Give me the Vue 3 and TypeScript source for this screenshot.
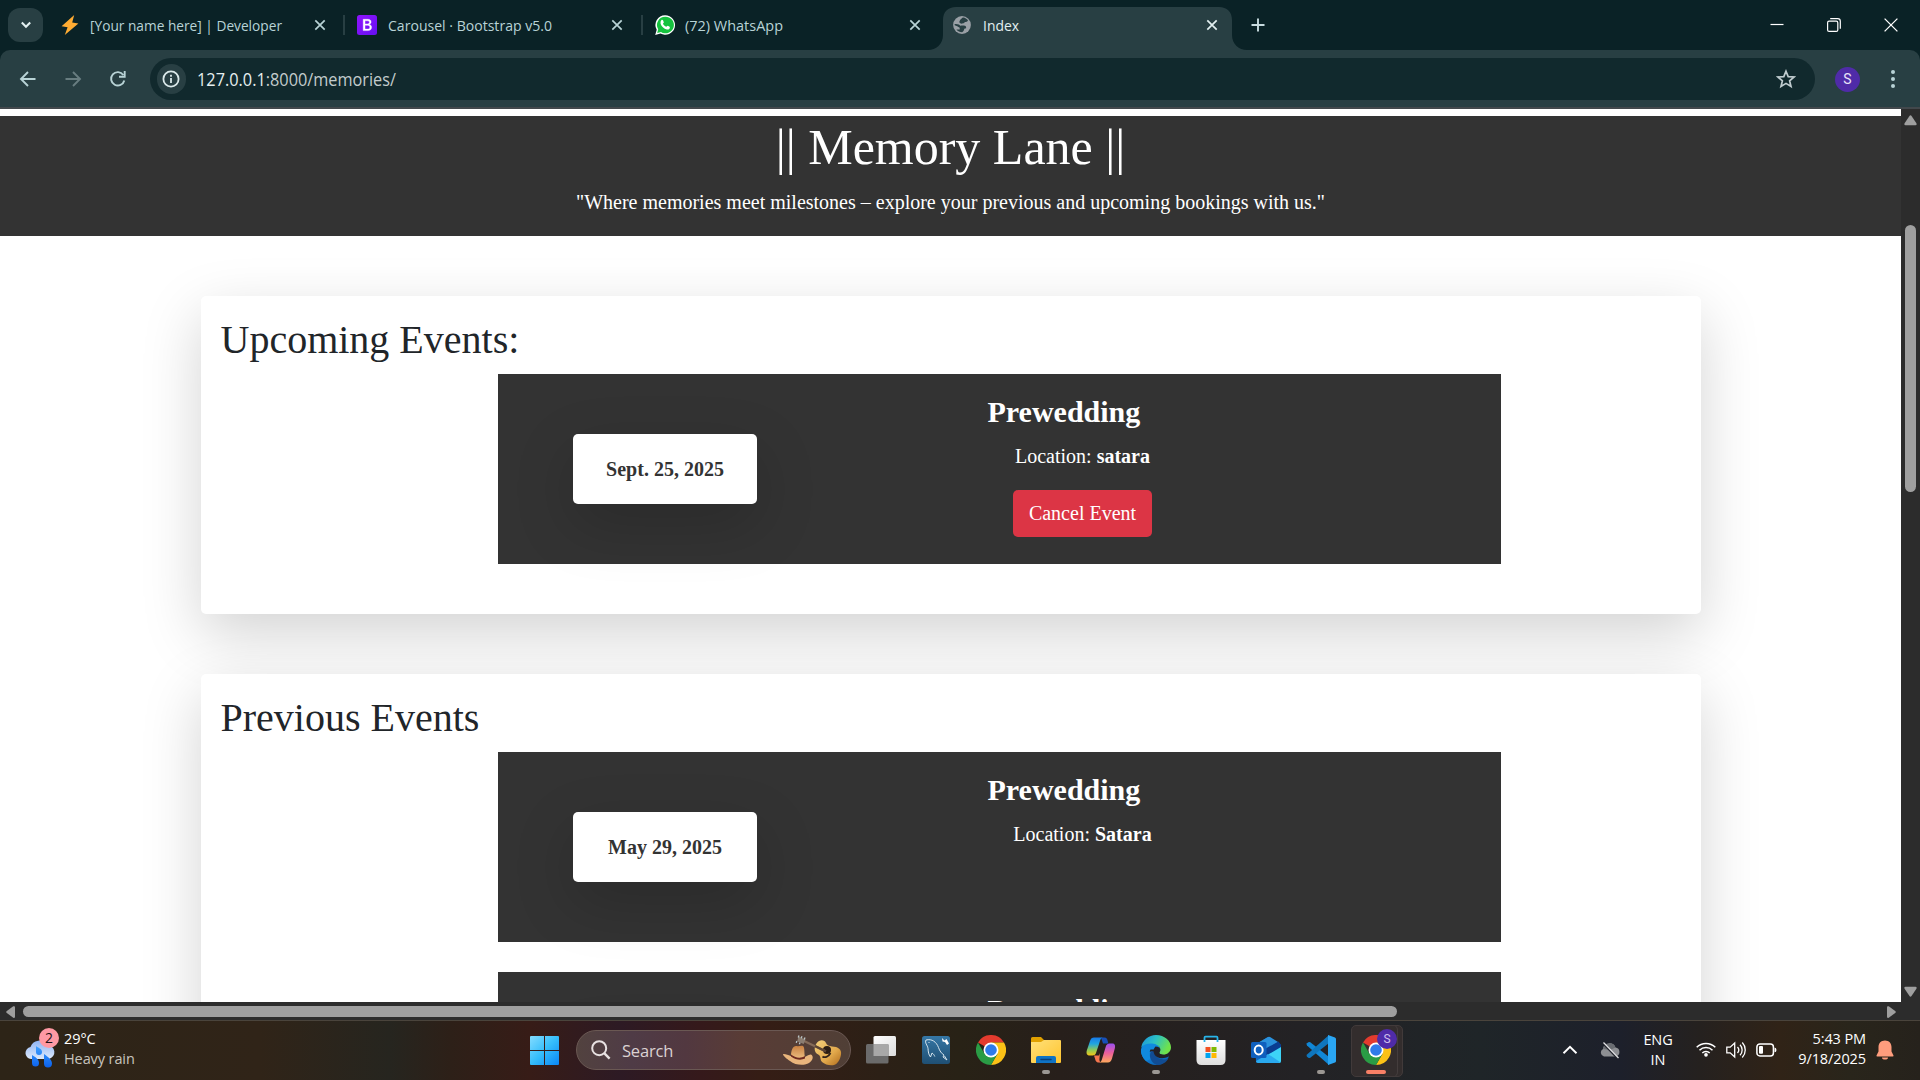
<script setup lang="ts">
interface Tab {
  icon: 'bolt' | 'bootstrap' | 'whatsapp' | 'globe'
  title: string
  width: number
  active?: boolean
}
interface EventItem {
  name: string
  date: string
  location: string
  cancellable?: boolean
}
interface Section {
  heading: string
  events: EventItem[]
}
interface AppIcon {
  id: string
  state?: 'open' | 'current'
}

const tabs: Tab[] = [
  { icon: 'bolt', title: '[Your name here] | Developer', width: 192 },
  { icon: 'bootstrap', title: 'Carousel · Bootstrap v5.0', width: 164 },
  { icon: 'whatsapp', title: '(72) WhatsApp', width: 98 },
  { icon: 'globe', title: 'Index', width: 36, active: true },
]

const sections: Section[] = [
  {
    heading: 'Upcoming Events:',
    events: [{ name: 'Prewedding', date: 'Sept. 25, 2025', location: 'satara', cancellable: true }],
  },
  {
    heading: 'Previous Events',
    events: [
      { name: 'Prewedding', date: 'May 29, 2025', location: 'Satara' },
      { name: 'Prewedding', date: '', location: '' },
    ],
  },
]

const apps: AppIcon[] = [
  { id: 'taskview' },
  { id: 'mysql' },
  { id: 'chrome' },
  { id: 'folder', state: 'open' },
  { id: 'copilot' },
  { id: 'edge', state: 'open' },
  { id: 'store' },
  { id: 'outlook' },
  { id: 'vscode', state: 'open' },
  { id: 'chrome', state: 'current' },
]
</script>

<template>
  <div class="desktop">
    <div class="tabstrip">
      <div class="tabsearch">
        <svg width="12" height="12" viewBox="0 0 12 12"><path d="M1.8 3.6 6 7.8l4.2-4.2" fill="none" stroke="#e3f0f1" stroke-width="2.1" /></svg>
      </div>
      <div v-for="(t, i) in tabs" :key="t.title" class="tab" :class="{ active: t.active, divided: i < 2 }">
        <svg v-if="t.active" class="tabshape" width="321" height="43" viewBox="0 0 321 43">
          <path d="M0 43h1C9 43 16 37 16 28V13C16 5 21 0 29 0h263c8 0 13 5 13 13v15c0 9 7 15 15 15h1z" fill="#283f43" />
        </svg>
        <svg v-if="t.icon === 'bolt'" class="fav" viewBox="0 0 20 20"><path d="M14.2 0 1.6 11.2l6 1L4.8 20 18.4 8.6l-6.2-1.2z" fill="#ffac33" /></svg>
        <svg v-else-if="t.icon === 'bootstrap'" class="fav boot" viewBox="0 0 20 20">
          <defs><linearGradient id="bs" x1="0" y1="0" x2="1" y2="1"><stop offset="0" stop-color="#9013fe" /><stop offset="1" stop-color="#6610f2" /></linearGradient></defs>
          <rect width="20" height="20" rx="2.5" fill="url(#bs)" />
          <path d="M6.2 4.3h4.7c2.1 0 3.2 1 3.2 2.6 0 1.3-.8 2.1-2 2.5 1.600.3 2.500 1.300 2.500 2.900 0 2-1.300 3.300-3.800 3.300H6.200z M8 8.900h2.400c1.300 0 2-.5 2-1.600 0-1-.7-1.500-1.900-1.500H8z M8 14.100h2.700c1.400 0 2.100-.7 2.100-1.900 0-1.200-.8-1.900-2.200-1.900H8z" fill="#fff" fill-rule="evenodd" stroke="#fff" stroke-width=".4" />
        </svg>
        <svg v-else-if="t.icon === 'whatsapp'" class="fav" viewBox="0 0 20 20">
          <path d="M10.200.2a9.700 9.700 0 0 0-8.500 14.500L.2 20l5.300-1.400A9.800 9.800 0 1 0 10.200.2z" fill="#fff" />
          <path d="M10.200 1.700a8.200 8.200 0 0 0-7 12.500l-1 3.700 3.800-1A8.300 8.300 0 1 0 10.200 1.700z" fill="#15c23e" />
          <path d="M6.300 5.300c.6-.7 1.400-.5 1.700 0l.8 1.900c.1.500-.8 1.200-.8 1.500.6 1.400 1.800 2.500 3.300 3.100.4 0 1-1.100 1.500-1l1.800.9c.5.300.3 1.600-.4 2.200-1 .8-2.400.9-4.800-.5C7.200 12 5.700 9.900 5.500 8.200c-.1-1.200.2-2.200.8-2.900z" fill="#fff" />
        </svg>
        <svg v-else class="fav globe" viewBox="0 0 20 20">
          <circle cx="10" cy="10" r="8.900" fill="#9aa0a6" />
          <path d="M11.500 2.700c2 .4 3.300 1.300 4.300 2.800-.6 1.200-1.700 1.500-3.300 1.500v1.700l-2 .6-.4 1.600h2.400c1.600 0 2.500 1 2.500 2.500l2-.3c-1 2.200-2.900 3.600-5.300 4.100-1-.3-1.400-.9-1.400-2.400l-.8-1.500-1.700-.6-.2-2.100-3-.7-1.900-2c-.3 4.300 1.600 7.500 5.600 8.800l-.4-2.400-1.300-1.200" fill="none" stroke="#283f43" stroke-width="0" />
          <path d="M11.300 2.600c-1.600.3-1.700 1.500-3 2.100-.7.500-.2 1.700-1.300 2.300l2 1.700 3.500-.8V7c1.700 0 3-.2 3.500-1.700-1.300-1.500-2.800-2.400-4.700-2.700zM2.600 8.900c1.500.2 4.400-.2 5 1.200.4 1 1.300.4 2.700.4h1.500c1.900 0 2.600 1.300 2.300 2.700l-1.800.6c-.3 1.300-.7 2.600-2.200 3.400-2.300-.1-4.200-.8-5.700-2.600h3.300v-1.800l-2.500-1.500-2.500-1z" fill="#283f43" />
        </svg>
        <div class="title"><svg class="fit" :width="t.width + 4" height="24"><text x="0" y="17.500" :textLength="t.width" lengthAdjust="spacingAndGlyphs">{{ t.title }}</text></svg></div>
        <svg class="close" width="12" height="12" viewBox="0 0 12 12"><path d="m1.300 1.300 9.400 9.400M10.700 1.300l-9.400 9.400" stroke="currentColor" stroke-width="1.700" /></svg>
      </div>
      <svg class="plus" width="14" height="14" viewBox="0 0 14 14"><path d="M7 .5v13M.5 7h13" stroke="#c8dcdf" stroke-width="1.900" /></svg>
      <div class="wincontrols">
        <svg width="14" height="14" viewBox="0 0 14 14"><path d="M.5 6.500h13" stroke="#fff" stroke-width="1.200" /></svg>
        <svg width="14" height="14" viewBox="0 0 14 14" fill="none" stroke="#fff" stroke-width="1.200"><rect x=".6" y="3.200" width="10.200" height="10.200" rx="1.500" /><path d="M3.200.7h7.500c1.600 0 2.600 1 2.600 2.600v7.400" /></svg>
        <svg width="14" height="14" viewBox="0 0 14 14"><path d="m.6.6 12.800 12.800M13.400.6.6 13.400" stroke="#fff" stroke-width="1.300" /></svg>
      </div>
    </div>

    <div class="toolbarwrap">
      <div class="toolbar">
        <svg class="nav" viewBox="0 0 20 20" fill="none" stroke="#b8d3d6" stroke-width="1.900"><path d="M17.500 10H3.500M10 3l-7 7 7 7" /></svg>
        <svg class="nav" viewBox="0 0 20 20" fill="none" stroke="#687d80" stroke-width="1.900"><path d="M2.500 10h14M10 3l7 7-7 7" /></svg>
        <svg class="nav" viewBox="0 0 20 20" fill="none" stroke="#b8d3d6" stroke-width="1.900"><path d="M16.300 11.500A6.700 6.700 0 1 1 15.300 6M16.700 2v5.700H11" /></svg>
        <div class="omnibox">
          <div class="info">
            <svg width="18" height="18" viewBox="0 0 18 18"><circle cx="9" cy="9" r="7.600" fill="none" stroke="#dbe9ea" stroke-width="1.800" /><path d="M9 8v5M9 4.800v1.900" stroke="#dbe9ea" stroke-width="1.800" /></svg>
          </div>
          <svg class="fit url" width="204" height="28"><text x="0" y="21" textLength="199" lengthAdjust="spacingAndGlyphs"><tspan fill="#e6eff0">127.0.0.1</tspan><tspan fill="#c3cccc">:8000/memories/</tspan></text></svg>
          <svg class="star" width="20" height="20" viewBox="0 0 20 20"><path d="m10 2.200 2.200 5.400 5.900.4-4.500 3.800 1.400 5.700-5-3.100-5 3.100 1.400-5.700L1.900 8l5.900-.4z" fill="none" stroke="#c0cccf" stroke-width="1.700" /></svg>
        </div>
        <div class="avatar">S</div>
        <svg class="dots" width="6" height="20" viewBox="0 0 6 20" fill="#b8d3d6"><circle cx="3" cy="3.100" r="2" /><circle cx="3" cy="10" r="2" /><circle cx="3" cy="16.900" r="2" /></svg>
      </div>
    </div>

    <div class="viewport">
      <div class="page">
        <header class="banner">
          <h1>|| Memory Lane ||</h1>
          <p>"Where memories meet milestones – explore your previous and upcoming bookings with us."</p>
        </header>
        <section v-for="s in sections" :key="s.heading" class="panel">
          <h2>{{ s.heading }}</h2>
          <article v-for="(e, i) in s.events" :key="i" class="event">
            <div class="date">{{ e.date }}</div>
            <div class="details">
              <h4>{{ e.name }}</h4>
              <p v-if="e.location">Location: <b>{{ e.location }}</b></p>
              <button v-if="e.cancellable">Cancel Event</button>
            </div>
          </article>
        </section>
      </div>
      <div class="vbar">
        <svg width="13" height="11" viewBox="0 0 13 11"><path d="M5.300 1.200q1.200-1.700 2.400 0l4.700 7q.8 2-.9 2H1.500q-1.700 0-.9-2z" fill="#9f9f9f" /></svg>
        <div class="vthumb"></div>
        <svg class="down" width="13" height="11" viewBox="0 0 13 11"><path d="M5.300 9.800q1.200 1.700 2.400 0l4.700-7q.8-2-.9-2H1.500q-1.700 0-.9 2z" fill="#9f9f9f" /></svg>
      </div>
    </div>
    <div class="hbar">
      <svg width="10" height="12" viewBox="0 0 10 12"><path d="M.8 4.900q-1.200 1.100 0 2.200l6.500 4.600q1.700.7 1.700-.9V1.200Q9-.3 7.300.3z" fill="#9f9f9f" /></svg>
      <div class="hthumb"></div>
      <svg class="right" width="10" height="12" viewBox="0 0 10 12"><path d="M9.200 4.900q1.200 1.100 0 2.200l-6.500 4.600q-1.700.7-1.700-.9V1.200Q1-.3 2.700.3z" fill="#9f9f9f" /></svg>
    </div>

    <footer class="taskbar">
      <div class="weather">
        <div class="wicon">
          <svg width="32" height="30" viewBox="0 0 32 30">
            <defs>
              <linearGradient id="cl" x1="0" y1="0" x2="0" y2="1"><stop offset="0" stop-color="#8fb4f4" /><stop offset="1" stop-color="#dde9fb" /></linearGradient>
              <linearGradient id="dr" x1="0" y1="0" x2="0" y2="1"><stop offset="0" stop-color="#3fa0ff" /><stop offset="1" stop-color="#0b62ee" /></linearGradient>
            </defs>
            <path d="M7 21a6 6 0 0 1-.5-11.900A9 9 0 0 1 23 7.200 7 7 0 0 1 25 21z" fill="url(#cl)" />
            <path d="M12 8c2 2 6 2.500 6 6a3 3 0 0 1-6 0zM8 17c3 2 7 4 7 8a3.500 3.500 0 0 1-7 0zM20 16c4 3 8 5.500 8 9.500a4 4 0 0 1-8 0z" fill="url(#dr)" />
          </svg>
          <span class="badge">2</span>
        </div>
        <div class="wtext"><div>29°C</div><div class="dim">Heavy rain</div></div>
      </div>
      <svg class="start" width="29" height="29" viewBox="0 0 29 29">
        <defs><linearGradient id="win" x1="0" y1="0" x2="1" y2="1"><stop offset="0" stop-color="#84dcff" /><stop offset=".5" stop-color="#35bdfb" /><stop offset="1" stop-color="#0a86f5" /></linearGradient></defs>
        <path d="M1 0h13v14H0V1q0-1 1-1zM15 0h13q1 0 1 1v13H15zM0 15h14v14H1q-1 0-1-1zM15 15h14v13q0 1-1 1H15z" fill="url(#win)" />
      </svg>
      <div class="search">
        <svg width="20" height="20" viewBox="0 0 20 20" fill="none" stroke="#e8e2e2" stroke-width="2"><circle cx="8.200" cy="8.200" r="7" /><path d="m13.200 13.200 5.400 5.400" stroke-width="2.400" /></svg>
        <span>Search</span>
        <svg class="doodle" width="60" height="32" viewBox="0 0 60 32">
          <defs>
            <linearGradient id="gt" x1="0" y1="0" x2="1" y2="1"><stop offset="0" stop-color="#f3d07c" /><stop offset=".6" stop-color="#e2a94c" /><stop offset="1" stop-color="#b06c1d" /></linearGradient>
            <linearGradient id="hat" x1="0" y1="0" x2="0" y2="1"><stop offset="0" stop-color="#c98142" /><stop offset="1" stop-color="#f0c387" /></linearGradient>
          </defs>
          <path d="M32 17c-1-4 1-8 4-10 3-1.500 6-.5 7 2 .8 2.500 3 3 6 3.500 6 0 10 3 9 8-.6 5-3.500 9.500-7 10.500-4 1-9-.5-12-3-2-2-1-4.500-2.500-6.500-1.500-1.500-4-2-4.500-4.500z" fill="url(#gt)" />
          <circle cx="44" cy="16" r="4" fill="#2b1d14" />
          <path d="M39.500 22.500c2 1.500 6 .5 8-3.500" fill="none" stroke="#33231a" stroke-width="1.800" />
          <path d="m20 6.500 22.500 10.800" stroke="#856b59" stroke-width="2.200" />
          <path d="m32 12 11 5.500" stroke="#5b4332" stroke-width="2.400" />
          <path d="m15.500 2.500 7 3-1.800 4.500-6.500-2.700z" fill="#8b7d72" />
          <path d="m16 1.500-.8 2M19 2.300l-.8 2M22 3.500l-.8 2M13.800 7l-.5 1.800M17 8.500l-.6 1.800" stroke="#b9c4c6" stroke-width="1.300" />
          <path d="M8 22c0-6 2-10 5-10 3 .5 5-.5 7 0 2 1 1 8 2 11l-7 3z" fill="url(#hat)" />
          <path d="M0 20c5-.5 9 4 17 4 5 0 9-4 11-3.500C31 22 30 27 25 29.500 20 32 12 31 7 27 4 25 0 22 0 20z" fill="#e9b57c" />
          <path d="M8 20.500c4 3 9 4.500 14 1.500v2.500c-4 2-9 1.500-14-2z" fill="#6f2a20" />
        </svg>
      </div>
      <div class="apps">
        <div v-for="(a, i) in apps" :key="i" class="app" :class="a.state">
          <svg v-if="a.id === 'taskview'" width="30" height="30" viewBox="0 0 30 30">
            <defs><linearGradient id="tv" x1="0" y1="0" x2="1" y2="1"><stop offset="0" stop-color="#fff" /><stop offset="1" stop-color="#dcdcdc" /></linearGradient></defs>
            <rect x="7.500" y="1" width="22.500" height="20" rx="1.500" fill="url(#tv)" /><rect x="0" y="9" width="22.500" height="19.500" rx="1.500" fill="#6b6b6b" /><path d="M7.500 9h15v12h-15z" fill="#a8a8a8" />
          </svg>
          <svg v-else-if="a.id === 'mysql'" width="30" height="30" viewBox="0 0 30 30">
            <defs><linearGradient id="my" x1="0" y1="0" x2="0" y2="1"><stop offset="0" stop-color="#3577a6" /><stop offset="1" stop-color="#1f4f73" /></linearGradient></defs>
            <rect x="1" y="1" width="28" height="28" rx="2.500" fill="url(#my)" />
            <path d="M5 5c6-1.500 10.500 2 12.500 7.500 1.200 3.500 3 6 5.500 7.500l-1 2 4 3-2.500-4M5 5c-1.500 3 1.500 5 2 8.500.3 3.500.5 6 2.500 8.500l1.500-4c1.500 1 2.200 2 2.800 3.500M7.500 7.500h1" fill="none" stroke="#d6e5ee" stroke-width="1" /><path d="m21 3 2.500 2.500 2-1.500L28 8.500l-2 1.500-2-3-2.500-.5z" fill="#fff" />
          </svg>
          <svg v-else-if="a.id === 'chrome'" width="30" height="30" viewBox="0 0 48 48">
            <path d="M24 24 3.200 12A24 24 0 0 1 44.800 12H24z" fill="#e33b2e" /><path d="M24 24V12h20.800A24 24 0 0 1 24 48l10.400-18z" fill="#fbc116" /><path d="M24 24l10.400 6L24 48A24 24 0 0 1 3.200 12l10.400 18z" fill="#2a9c45" />
            <circle cx="24" cy="24" r="12" fill="#fff" /><circle cx="24" cy="24" r="9.300" fill="#2f7bea" />
          </svg>
          <svg v-else-if="a.id === 'folder'" width="30" height="30" viewBox="0 0 30 30">
            <defs><linearGradient id="fo" x1="0" y1="0" x2="1" y2="1"><stop offset="0" stop-color="#ffe07a" /><stop offset="1" stop-color="#ffc42e" /></linearGradient></defs>
            <path d="M0 3.500Q0 2 1.500 2H10l3 3h14v6H0z" fill="#e0a000" /><path d="M0 7h10l3-2h16q1 0 1 1v21q0 1-1 1H1q-1 0-1-1z" fill="url(#fo)" />
            <path d="M5 28v-5q0-2 2-2h16q2 0 2 2v5z" fill="#0f73c4" /><path d="M10 24.500h10" stroke="#0a3f78" stroke-width="1.500" stroke-linecap="round" />
          </svg>
          <svg v-else-if="a.id === 'copilot'" width="30" height="30" viewBox="0 0 30 30">
            <defs>
              <linearGradient id="ca" x1="0" y1="0" x2="0" y2="1"><stop offset="0" stop-color="#1779e8" /><stop offset=".35" stop-color="#20a5e0" /><stop offset=".7" stop-color="#8fca56" /><stop offset="1" stop-color="#f6c515" /></linearGradient>
              <linearGradient id="cb" x1="0" y1="0" x2="0" y2="1"><stop offset="0" stop-color="#9a4ff0" /><stop offset=".5" stop-color="#ec5f9b" /><stop offset="1" stop-color="#ffa95c" /></linearGradient>
            </defs>
            <path d="M15 2.500h3.500c2 0 2.800 1.500 3.300 3.800l.4 2.200H17z" fill="#174fb8" /><path d="M8 2.500h9c-2 0-2.500 1.500-3.500 5l-3 9c-.8 3-2 4-4 4H4c-3 0-4-2-3.200-5L4 6c.8-2.400 2-3.500 4-3.500z" fill="url(#ca)" />
            <path d="M22 27.500h-9c2 0 2.500-1.500 3.500-5l3-10c.8-3 2-4 4-4H26c3 0 3.500 2 2.800 5L26 23.500c-.8 2.500-2 4-4 4z" fill="url(#cb)" /><path d="M8 20.500h5l1-2.500-.5 5c-.5 3 .5 4.500 2.500 4.500h-3c-3 0-3.500-2-4-4z" fill="#f5754e" />
          </svg>
          <svg v-else-if="a.id === 'edge'" width="30" height="30" viewBox="0 0 30 30">
            <defs>
              <linearGradient id="ea" x1="0" y1="0" x2="1" y2=".4"><stop offset="0" stop-color="#1a8fe0" /><stop offset=".5" stop-color="#2cc1c4" /><stop offset="1" stop-color="#6fe24b" /></linearGradient>
              <linearGradient id="eb" x1="0" y1="0" x2="1" y2="1"><stop offset="0" stop-color="#1390e6" /><stop offset="1" stop-color="#0a5cae" /></linearGradient>
            </defs>
            <path d="M0 14A15 15 0 0 0 15 30c5.500 0 10-3 12.500-7.500V18H14z" fill="url(#eb)" />
            <path d="M0 15.500C0 10 5 6.500 11 7c5 .4 8 4 8 7.500H9.500C8 17 8 21 10 24L5 26C2 23 0 19.500 0 15.500z" fill="#108ade" />
            <path d="M10 16c-2.500 5-.5 11.500 6 14 5 .2 9-2.500 11.500-6.500-2.500 1-5 1.200-7.500.5-4-1-6.500-4-6.500-7.500z" fill="#114c93" />
            <path d="M14.500 11.500c-3 3-2.500 8 1.500 10.500 4 2.200 8.500 1 11.500-.5l1-2-1-2c-3 2.200-6.800 2.200-8.500.8-.8-.9.500-1.600.5-3.300 0-1.800-2-3.500-5-3.500z" fill="#222025" />
            <path d="M.2 12.500A15 15 0 0 1 15 0c8.500 0 15 6 15 12.200 0 4.600-3.700 7.300-7.500 7.300-3.200 0-4.700-1-3.700-2.500 2-3.500-1-7.200-6-8.200C7.500 7.900 2.500 9.500.2 12.500z" fill="url(#ea)" />
          </svg>
          <svg v-else-if="a.id === 'store'" width="30" height="30" viewBox="0 0 30 30">
            <defs><linearGradient id="st" x1="0" y1="0" x2="0" y2="1"><stop offset="0" stop-color="#fff" /><stop offset="1" stop-color="#dedede" /></linearGradient></defs>
            <path d="M.5 5h29v20q0 5-5 5h-19q-5 0-5-5z" fill="url(#st)" /><path d="M8.500 7V2.700Q8.500 1.700 9.500 1.700h11q1 0 1 1V7" fill="none" stroke="#28b5ea" stroke-width="1.800" />
            <path d="M9.500 12h5v5h-5z" fill="#f25022" /><path d="M15.500 12h5v5h-5z" fill="#7fba00" /><path d="M9.500 18h5v5h-5z" fill="#00a4ef" /><path d="M15.500 18h5v5h-5z" fill="#ffb900" />
          </svg>
          <svg v-else-if="a.id === 'outlook'" width="30" height="30" viewBox="0 0 30 30">
            <path d="M4 10 16 2.500q1.500-1 3 0L30 10v16q0 2-2 2H7q-2 0-2-2z" fill="#1069c2" /><path d="m5 9 12-7q1-.5 2 0l8 5-15 9z" fill="#2a91dc" /><path d="m12 15 15.500-8.500L30 10v3l-14 8z" fill="#0a3d91" /><path d="M30 12v14q0 2-2 2H10l8-9z" fill="#3dd3f7" /><path d="m5 26 12-7 12 8q-.500 1-2 1H7q-2 0-2-2z" fill="#2aa9ee" />
            <rect y="7" width="15.500" height="16" rx="1.500" fill="#0f5fbd" /><ellipse cx="7.700" cy="15" rx="4" ry="4.400" fill="none" stroke="#fff" stroke-width="2" />
          </svg>
          <svg v-else width="30" height="30" viewBox="0 0 30 30">
            <path d="M1 10.500q-1-1.500 0-2.300l1.300-1q1-.6 2 .1L23 22v8L1 10.500z" fill="#1187d6" /><path d="M1 19.500q-1 1.500 0 2.300l1.300 1q1 .6 2-.1L23 8V0z" fill="#0f76bd" /><path d="M22 0v30l7-2.500q1-.5 1-1.500V4q0-1-1-1.500z" fill="#2aa6f3" />
          </svg>
          <span v-if="a.state === 'current'" class="profile">S</span>
        </div>
      </div>
      <div class="tray">
        <svg class="chev" width="16" height="10" viewBox="0 0 16 10"><path d="m1.500 8.200 6.500-6.400 6.500 6.400" fill="none" stroke="#fff" stroke-width="1.900" /></svg>
        <svg class="cloud" width="20" height="18" viewBox="0 0 20 18"><path d="M4 15.500A4 4 0 0 1 3 8 6.500 6.500 0 0 1 15.500 6.500 4.600 4.600 0 0 1 16 15.500z" fill="#8d8f93" /><path d="M3 8A6.500 6.500 0 0 1 15.500 6.500L10 9z" fill="#696c71" /><path d="m3 2 15 15.500" stroke="#20232c" stroke-width="2.400" /><path d="m3.500 1.500 15 15.500" stroke="#e6e6e8" stroke-width="1.200" /></svg>
        <div class="lang"><div>ENG</div><div>IN</div></div>
        <svg class="wifi" width="20" height="16" viewBox="0 0 20 16" fill="none" stroke="#fff" stroke-width="1.500"><path d="M.7 6.300a13 13 0 0 1 18.600 0M3.500 9.200a9.200 9.200 0 0 1 13 0M6.300 12a5.200 5.200 0 0 1 7.400 0" /><circle cx="10" cy="13.800" r="1.100" fill="#fff" /></svg>
        <svg class="vol" width="20" height="18" viewBox="0 0 20 18" fill="none" stroke="#fff" stroke-width="1.300"><path d="M.8 6.200h3.400L8.700 2v14l-4.500-4.200H.8zM11.500 6a4.500 4.500 0 0 1 0 6M14 3.700a7.600 7.600 0 0 1 0 10.600M16.300 1.500a11 11 0 0 1 0 15" /></svg>
        <svg class="bat" width="21" height="14" viewBox="0 0 21 14"><rect x=".9" y=".9" width="16.500" height="12" rx="3" fill="none" stroke="#fff" stroke-width="1.500" /><rect x="3" y="3" width="4" height="7.800" rx="1" fill="#fff" /><path d="M18.500 4.500q2 .3 2 2.400t-2 2.400z" fill="#fff" /></svg>
        <div class="clock"><div>5:43 PM</div><div>9/18/2025</div></div>
        <svg class="bell" width="18" height="20" viewBox="0 0 18 20" fill="#ff9d7d"><path d="M9 .5c4 0 6.500 2.800 6.500 6.500v4.500l2 4q.3 1-.8 1H1.300q-1.100 0-.8-1l2-4V7C2.500 3.300 5 .5 9 .5zM6 17.500h6a3 2 0 0 1-6 0z" /></svg>
      </div>
    </footer>
  </div>
</template>

<style>
body {
  margin: 0;
  overflow: hidden;
}
</style>

<style scoped>
* {
  box-sizing: border-box;
}
svg {
  display: block;
  flex: none;
}
.desktop {
  width: 1920px;
  height: 1080px;
  display: flex;
  flex-direction: column;
  overflow: hidden;
  background: #0a2226;
  font-family: 'Open Sans', 'Noto Sans', sans-serif;
}
.tabstrip {
  height: 50px;
  flex: none;
  display: flex;
  align-items: center;
  padding-left: 8px;
}
.tabsearch {
  width: 35px;
  height: 34px;
  border-radius: 12px;
  background: #283f43;
  display: flex;
  align-items: center;
  justify-content: center;
  margin-right: 3.5px;
}
.tab {
  position: relative;
  width: 297.5px;
  height: 50px;
  display: flex;
  align-items: center;
  gap: 10px;
  padding: 0 18.5px 0 13.5px;
  color: #b8d3d6;
}
.tab.divided::after {
  content: '';
  position: absolute;
  right: -1px;
  top: 15px;
  width: 2px;
  height: 20px;
  background: #283f43;
}
.tab.active {
  color: #e2eff0;
}
.tabshape {
  position: absolute;
  left: -12px;
  top: 7px;
}
.fav {
  width: 20px;
  height: 20px;
  position: relative;
}
.fav.boot,
.fav.globe {
  margin: 0 0.5px 0 -0.5px;
}
.title {
  flex: 1;
  position: relative;
}
.fit {
  overflow: visible;
}
.fit text {
  font-size: 15px;
  fill: currentColor;
}
.fit.url {
  margin-left: 11.5px;
}
.fit.url text {
  font-size: 17.5px;
}
.close {
  position: relative;
}
.plus {
  margin-left: 14.5px;
}
.wincontrols {
  margin-left: auto;
  display: flex;
  gap: 43px;
  padding-right: 22px;
}
.toolbarwrap {
  flex: none;
  height: 59px;
}
.toolbar {
  height: 59px;
  background: #283f43;
  border-bottom: 2px solid #42484c;
  border-radius: 10px 10px 0 0;
  display: flex;
  align-items: center;
  padding: 1px 24.5px 0 18px;
}
.nav {
  width: 20px;
  height: 20px;
  margin-right: 25px;
}
.nav + .nav + .nav {
  margin-right: 22px;
}
.omnibox {
  width: 1665px;
  height: 42px;
  border-radius: 21px;
  background: #11292d;
  display: flex;
  align-items: center;
  padding: 0 19.5px 0 6.5px;
}
.info {
  width: 29px;
  height: 30px;
  border-radius: 15px;
  background: #283f43;
  display: flex;
  align-items: center;
  justify-content: center;
}
.star {
  margin-left: auto;
}
.avatar {
  width: 25px;
  height: 25px;
  margin-left: 20px;
  border-radius: 50%;
  background: #4f2ba8;
  color: #e9e2f8;
  font: 14px/25px Roboto, sans-serif;
  text-align: center;
}
.dots {
  margin-left: auto;
}
.viewport {
  height: 893px;
  flex: none;
  display: flex;
}
.page {
  width: 1901px;
  height: 893px;
  overflow: hidden;
  background: #fff;
  color: #212529;
  font-family: 'Liberation Serif', serif;
  font-size: 20px;
  line-height: 30px;
  padding-top: 7px;
}
.banner {
  height: 120px;
  padding-top: 1px;
  background: #333;
  color: #fff;
  text-align: center;
}
h1,
h2,
h4,
p {
  margin: 0;
  font-weight: 400;
}
h1 {
  font-size: 50px;
  line-height: 60px;
  padding-bottom: 10px;
}
.panel {
  width: 1500px;
  margin: 60px auto 0 201px;
  padding: 20px 20px 20px 19.5px;
  border-radius: 5px;
  background: #fff;
  box-shadow: 0 20px 60px rgba(0, 0, 0, 0.175);
}
h2 {
  font-size: 40px;
  line-height: 48px;
  margin-bottom: 10px;
}
.event {
  width: 1003px;
  height: 190px;
  margin: 0 0 30px 277.5px;
  background: #333;
  color: #fff;
  display: flex;
  align-items: flex-start;
  padding-left: 75px;
}
.date {
  width: 184px;
  height: 70px;
  margin-top: 60px;
  padding: 20px 0;
  border-radius: 5px;
  background: #fff;
  color: #333;
  font-weight: 700;
  text-align: center;
  box-shadow: 0 20px 60px rgba(0, 0, 0, 0.175);
}
.details {
  width: 190px;
  margin-left: 230.5px;
  padding-top: 20px;
  display: flex;
  flex-direction: column;
  align-items: center;
}
h4 {
  align-self: flex-start;
  font-size: 30px;
  line-height: 36px;
  font-weight: 700;
  margin-bottom: 11px;
}
button {
  margin-top: 19px;
  width: 139px;
  height: 47px;
  border: 0;
  padding: 0 0 1px;
  border-radius: 5px;
  background: #dc3545;
  color: #fff;
  font: 20px/30px 'Liberation Serif', serif;
}
.vbar {
  width: 19px;
  background: #2c2c2c;
  display: flex;
  flex-direction: column;
  align-items: center;
  padding-top: 6px;
}
.vthumb {
  width: 11px;
  height: 267px;
  margin-top: 99px;
  border-radius: 6px;
  background: #9f9f9f;
}
.down {
  margin-top: auto;
  margin-bottom: 5px;
}
.hbar {
  height: 18px;
  flex: none;
  background: #2c2c2c;
  display: flex;
  align-items: center;
  padding: 1px 24px 0 6px;
}
.hthumb {
  width: 1374px;
  height: 11px;
  margin-left: 7px;
  border-radius: 6px;
  background: #9f9f9f;
}
.right {
  margin-left: auto;
}
.taskbar {
  height: 60px;
  flex: none;
  border-top: 1px solid #4a443c;
  display: flex;
  align-items: center;
  padding-bottom: 1px;
  background: linear-gradient(90deg, #2d2417 0, #302418 260px, #26251f 390px, #2d2018 450px, #371c17 530px, #2d1a24 620px, #35191b 700px, #351d15 760px, #2c2016 880px, #282216 960px, #271f1b 1060px, #232225 1300px, #1f2528 1480px, #1d202b 1620px, #25211f 1700px, #302317 1780px, #29251b 1850px, #26221c 1920px);
  color: #fff;
}
.weather {
  width: 530px;
  display: flex;
  align-items: center;
  padding-left: 24px;
}
.wicon {
  position: relative;
  width: 32px;
  height: 30px;
  margin-top: 6px;
}
.badge {
  position: absolute;
  left: 15px;
  top: -10px;
  width: 20px;
  height: 20px;
  border-radius: 50%;
  background: #ff99a4;
  color: #1b1014;
  font-size: 14px;
  line-height: 20px;
  text-align: center;
}
.wtext {
  margin: 0 0 2px 8px;
  font-size: 14.5px;
  line-height: 20px;
  letter-spacing: -0.1px;
}
.dim {
  color: #c8c4be;
}
.search {
  width: 275px;
  height: 40px;
  margin-left: 17px;
  border-radius: 20px;
  border: 1px solid #6a5853;
  background: linear-gradient(90deg, #52423f, #4f3b46 20%, #523840 40%, #593c36 60%, #503f36);
  display: flex;
  align-items: center;
  padding: 0 7px 0 14px;
  color: #dbd2d2;
}
.search span {
  margin-left: 11px;
  font-size: 16.5px;
  letter-spacing: -0.2px;
}
.doodle {
  margin-left: auto;
}
.apps {
  display: flex;
  margin-left: 2.5px;
}
.app {
  position: relative;
  width: 55px;
  height: 58px;
  display: flex;
  align-items: center;
  justify-content: center;
}
.app > svg {
  position: relative;
}
.app.open::after,
.app.current::after {
  content: '';
  position: absolute;
  left: 23.5px;
  bottom: 5px;
  width: 8px;
  height: 4px;
  border-radius: 2px;
  background: #9b9793;
}
.app.current::after {
  left: 17.5px;
  width: 20px;
  background: #f98066;
}
.app.current::before {
  content: '';
  position: absolute;
  left: 2.5px;
  top: 4px;
  width: 50px;
  height: 50px;
  border: 1px solid #413a3a;
  border-radius: 5px;
  background: #332d2d;
  box-shadow: -5px 0 0 -1px #332d2d inset, -6px 0 0 -1px #443d3d inset;
}
.profile {
  position: absolute;
  left: 28.5px;
  top: 8px;
  width: 20px;
  height: 20px;
  border-radius: 50%;
  background: #4f2ba8;
  color: #cfc0ee;
  font: 12px/20px Roboto, sans-serif;
  text-align: center;
}
.tray {
  margin-left: auto;
  display: flex;
  align-items: center;
  font-size: 14.5px;
  line-height: 20px;
  letter-spacing: -0.1px;
  padding-right: 26px;
}
.chev {
  margin-right: 22px;
}
.lang {
  width: 36px;
  margin: 0 0 1px 20px;
  text-align: center;
}
.wifi {
  margin: 0 0 2px 20px;
}
.vol {
  margin: 0 0 1px 10px;
}
.bat {
  margin-left: 10px;
}
.clock {
  width: 89px;
  margin-bottom: 2px;
  text-align: right;
}
.bell {
  margin-left: 10px;
}
</style>
